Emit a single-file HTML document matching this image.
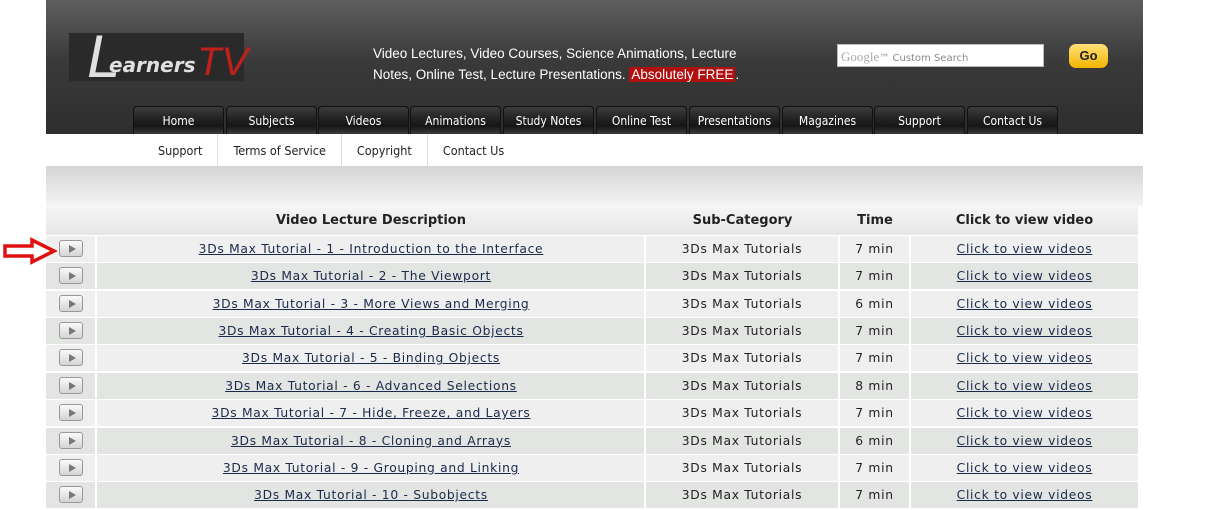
<!DOCTYPE html>
<html><head><meta charset="utf-8"><style>
*{margin:0;padding:0;box-sizing:border-box}
body{width:1224px;height:510px;background:#fff;position:relative;overflow:hidden;font-family:"DejaVu Sans",Verdana,sans-serif}
#hdr{position:absolute;left:46px;top:0;width:1097px;height:134px;background:linear-gradient(#5e5e5e 0,#3a3a3a 45%,#2e2e2e 100%)}
#logo{position:absolute;left:69px;top:33px;width:175px;height:48px;background:#2a2a2a}
#logo .L{position:absolute;left:18px;top:-6px;font:italic 60px "Liberation Sans",sans-serif;color:#e0e0e0;line-height:60px}
#logo .e{position:absolute;left:40px;top:20px;font:italic bold 20px "DejaVu Sans",sans-serif;color:#e0e0e0}
#logo .tv{position:absolute;left:128px;top:9px;font:italic 40px "Liberation Sans",sans-serif;color:#c0201a;line-height:40px}
#tag{position:absolute;left:373px;top:43px;font:13.5px/21px "Liberation Sans",sans-serif;color:#fff;width:380px}
#tag span{background:#b01010;padding:0 2px}
#srch{position:absolute;left:837px;top:44px;width:207px;height:23px;background:#fff;border:1px solid #bbb;font:10px "DejaVu Sans",sans-serif;color:#888;padding:4px 3px}
#srch b{font:13px "Liberation Serif",serif;color:#aaa}
#go{position:absolute;left:1069px;top:44px;width:39px;height:24px;border-radius:7px;background:linear-gradient(#ffe27a,#f4b400);font:bold 13px "Liberation Sans",sans-serif;color:#222;text-align:center;line-height:24px}
.nb{position:absolute;top:106px;height:28px;width:91px;border-radius:4px 4px 0 0;background:linear-gradient(#3d3d3d 0,#272727 35%,#151515 70%,#3b3b3b 100%);border:1px solid #111;border-bottom:none;color:#fff;font:12px "DejaVu Sans Condensed","DejaVu Sans",sans-serif;text-align:center;line-height:28px}
#sub{position:absolute;top:134px;left:143px;height:32px;font:12.5px "DejaVu Sans Condensed","DejaVu Sans",sans-serif;color:#222}
#sub span{float:left;padding:0 15px;line-height:33px;border-right:1px solid #ddd;height:32px}
#band{position:absolute;left:46px;top:166px;width:1097px;height:40px;background:linear-gradient(#d4d4d4,#f4f4f4)}
#th{position:absolute;left:46px;top:205px;width:1092px;height:30px;background:linear-gradient(#f6f6f6,#e6e6e6);font:bold 13px "DejaVu Sans",sans-serif;color:#222}
.c{position:absolute;text-align:center;top:0;height:100%;white-space:nowrap}
.row{position:absolute;left:46px;width:1092px;height:27px;font:12.3px "DejaVu Sans",sans-serif;color:#222;border-top:1px solid #fff;letter-spacing:0.7px}
.row .c{line-height:27px;border-left:2px solid #fff}
.row a{color:#1a2a4a;text-decoration:underline}
.ic{position:absolute;left:13px;top:4px;width:24px;height:17px;border:1px solid #999;border-radius:3px;background:linear-gradient(#fafafa,#d4d4d4)}
.ic:after{content:"";position:absolute;left:9px;top:4px;border-left:7px solid #777;border-top:4px solid transparent;border-bottom:4px solid transparent}
</style></head><body>
<div id="hdr"></div>
<div id="logo"><span class="L">L</span><span class="e">earners</span><span class="tv">TV</span></div>
<div id="tag">Video Lectures, Video Courses, Science Animations, Lecture Notes, Online Test, Lecture Presentations. <span>Absolutely FREE</span>.</div>
<div id="srch"><b>Google</b>™ Custom Search</div>
<div id="go">Go</div>
<div class="nb" style="left:133px">Home</div>
<div class="nb" style="left:226px">Subjects</div>
<div class="nb" style="left:318px">Videos</div>
<div class="nb" style="left:410px">Animations</div>
<div class="nb" style="left:503px">Study Notes</div>
<div class="nb" style="left:596px">Online Test</div>
<div class="nb" style="left:689px">Presentations</div>
<div class="nb" style="left:782px">Magazines</div>
<div class="nb" style="left:874px">Support</div>
<div class="nb" style="left:967px">Contact Us</div>
<div id="sub"><span>Support</span><span>Terms of Service</span><span>Copyright</span><span style="border:none">Contact Us</span></div>
<div id="band"></div>
<div id="th">
<div class="c" style="left:51px;width:548px;line-height:31px">Video Lecture Description</div>
<div class="c" style="left:600px;width:193px;line-height:31px">Sub-Category</div>
<div class="c" style="left:794px;width:70px;line-height:31px">Time</div>
<div class="c" style="left:865px;width:227px;line-height:31px">Click to view video</div>
</div>
<div id="rows"></div>
<script>
var t=["1 - Introduction to the Interface","2 - The Viewport","3 - More Views and Merging","4 - Creating Basic Objects","5 - Binding Objects","6 - Advanced Selections","7 - Hide, Freeze, and Layers","8 - Cloning and Arrays","9 - Grouping and Linking","10 - Subobjects"];
var m=[7,7,6,7,7,8,7,6,7,7],h="";
for(var i=0;i<10;i++){var bg=i%2?"#e3e5e3":"#efefef";
h+='<div class="row" style="top:'+(235+i*27.35).toFixed(1)+'px;background:'+bg+'"><div class="ic"></div>'+
'<div class="c" style="left:49px;width:550px"><a>3Ds Max Tutorial - '+t[i]+'</a></div>'+
'<div class="c" style="left:598px;width:194px">3Ds Max Tutorials</div>'+
'<div class="c" style="left:792px;width:71px">'+m[i]+' min</div>'+
'<div class="c" style="left:863px;width:229px"><a>Click to view videos</a></div></div>';}
document.getElementById("rows").innerHTML=h;
</script>
<svg style="position:absolute;left:2px;top:237px" width="56" height="30"><path d="M3 9 H30 V3 L52 14 L30 25 V19 H3 Z" fill="#fff" stroke="#e01010" stroke-width="3.5"/></svg>
</body></html>
